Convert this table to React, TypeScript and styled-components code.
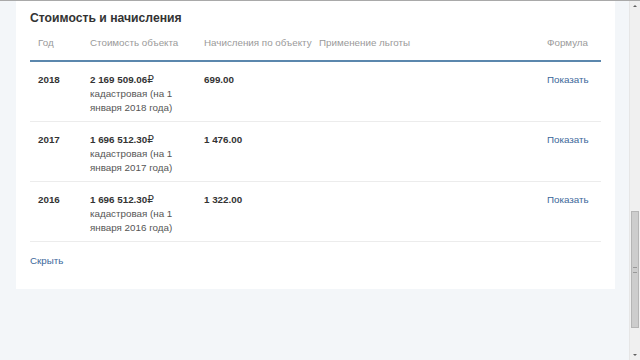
import styled, { createGlobalStyle } from 'styled-components'

const GlobalStyle = createGlobalStyle`
  html, body {
    margin: 0;
    padding: 0;
    overflow: hidden;
  }
  body {
    font-family: "Liberation Sans", Arial, sans-serif;
    background: #f3f6f9;
  }
`

const Screen = styled.div`
  display: flex;
  width: 640px;
  height: 360px;
  border-top: 1px solid #a9a9a9;
  box-sizing: border-box;
  overflow: hidden;
`

const Page = styled.main`
  flex: 1;
  padding: 0 14px 0 16px;
  background: #f3f6f9;
`

const Card = styled.section`
  background: #fff;
  padding: 8px 14px 21px;
`

const Title = styled.h2`
  margin: 0;
  font-size: 12.2px;
  line-height: 18px;
  font-weight: bold;
  color: #333;
`

const Row = styled.div<{ $head?: boolean }>`
  display: grid;
  grid-template-columns: 52px 114px 115px 1fr 62px;
  padding: ${p => (p.$head ? '9px 0 10px' : '11px 0 6px')};
  border-bottom: ${p => (p.$head ? '2px solid #5b87ad' : '1px solid #ececec')};
  font-size: 9.8px;
  line-height: 14px;
  color: ${p => (p.$head ? '#9a9a9a' : '#333')};
`

const Cell = styled.div`
  padding: 0 8px;
  white-space: nowrap;
`

const Strong = styled.div`
  font-weight: bold;
`

const Rub = styled.span`
  font-family: "DejaVu Sans", sans-serif;
  font-weight: normal;
  font-size: 10.5px;
  line-height: 1;
`

const Note = styled.div`
  color: #555;
  white-space: normal;
  width: 90px;
`

const Link = styled.a`
  color: #3b679a;
  text-decoration: none;
  cursor: pointer;
`

const HideLink = styled(Link)`
  display: block;
  margin-top: 12px;
  font-size: 9.8px;
  line-height: 14px;
`

const ScrollTrack = styled.div`
  width: 10px;
  background: #f0f0f0;
  border-left: 1px solid #e6e6e6;
  display: flex;
  flex-direction: column;
  align-items: center;
`

const Arrow = styled.div<{ $up?: boolean }>`
  width: 0;
  height: 0;
  margin: 4px 0;
  border-left: 2px solid transparent;
  border-right: 2px solid transparent;
  ${p => (p.$up ? 'border-bottom: 2px solid #606060;' : 'border-top: 2px solid #606060;')}
`

const ThumbSpace = styled.div`
  flex: 1;
  width: 100%;
  display: flex;
  flex-direction: column;
  padding-top: 200px;
  padding-bottom: 22px;
  box-sizing: border-box;
`

const Thumb = styled.div`
  flex: 1;
  margin: 0 1px;
  background: #cdcdcd;
  border: 1px solid #b5b5b5;
  display: flex;
  align-items: center;
  justify-content: center;
  &::after {
    content: '';
    width: 4px;
    height: 4px;
    border-top: 1px solid #999;
    border-bottom: 1px solid #999;
  }
`

const rows = [
  { year: '2018', cost: '2 169 509.06', date: '1 января 2018 года', charge: '699.00' },
  { year: '2017', cost: '1 696 512.30', date: '1 января 2017 года', charge: '1 476.00' },
  { year: '2016', cost: '1 696 512.30', date: '1 января 2016 года', charge: '1 322.00' },
]

const App = () => {
  return (
    <Screen>
      <GlobalStyle />
      <Page>
        <Card>
          <Title>Стоимость и начисления</Title>
          <Row $head>
            <Cell>Год</Cell>
            <Cell>Стоимость объекта</Cell>
            <Cell>Начисления по объекту</Cell>
            <Cell>Применение льготы</Cell>
            <Cell>Формула</Cell>
          </Row>
          {rows.map(r => (
            <Row key={r.year}>
              <Cell><Strong>{r.year}</Strong></Cell>
              <Cell>
                <Strong>{r.cost}<Rub>₽</Rub></Strong>
                <Note>{`кадастровая (на ${r.date})`}</Note>
              </Cell>
              <Cell><Strong>{r.charge}</Strong></Cell>
              <Cell />
              <Cell><Link>Показать</Link></Cell>
            </Row>
          ))}
          <HideLink>Скрыть</HideLink>
        </Card>
      </Page>
      <ScrollTrack>
        <Arrow $up />
        <ThumbSpace>
          <Thumb />
        </ThumbSpace>
        <Arrow />
      </ScrollTrack>
    </Screen>
  )
}

export default App
